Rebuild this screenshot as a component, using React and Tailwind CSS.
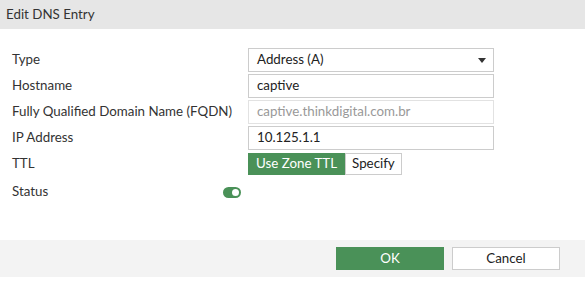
import { useState } from 'react';

const font = { fontFamily: 'Lato, "Liberation Sans", sans-serif' };

function Label({ children }) {
  return <div className="flex h-6 items-center pl-3 text-[13.33px] text-[#333]">{children}</div>;
}

export default function App() {
  const [ttl, setTtl] = useState('zone');

  return (
    <div className="flex h-[292px] w-[585px] flex-col bg-white" style={font}>
      <div className="flex h-[29px] items-center bg-[#e6e6e6] px-[6px] text-[13.33px] text-[#333]">Edit DNS Entry</div>

      <div className="grid grid-cols-[248px_246px] gap-y-[2px] pt-[19px]">
        <Label>Type</Label>
        <div className="flex h-6 items-center justify-between border border-[#ccc] pl-[8px] pr-[7px] text-[13.33px] text-[#222]">
          <span>Address (A)</span>
          <svg width="8" height="5" viewBox="0 0 8 5">
            <path d="M0 0h8L4 5z" fill="#333" />
          </svg>
        </div>

        <Label>Hostname</Label>
        <div className="flex h-6 items-center border border-[#ccc] pl-[8px] text-[13.33px] text-[#222]">captive</div>

        <Label>Fully Qualified Domain Name (FQDN)</Label>
        <div className="flex h-6 items-center border border-[#e2e2e2] pl-[8px] text-[13.33px] text-[#999]">captive.thinkdigital.com.br</div>

        <Label>IP Address</Label>
        <div className="flex h-6 items-center border border-[#ccc] pl-[8px] text-[13.33px] text-[#222]">10.125.1.1</div>

        <Label>TTL</Label>
        <div className="flex h-6 items-stretch py-[1px]">
          <button
            onClick={() => setTtl('zone')}
            className={`px-[8px] text-[13.33px] ${ttl === 'zone' ? 'bg-[#4a9158] text-white' : 'border border-[#ccc] bg-white text-[#222]'}`}
          >
            Use Zone TTL
          </button>
          <button
            onClick={() => setTtl('specify')}
            className={`px-[6px] text-[13.33px] ${ttl === 'specify' ? 'bg-[#4a9158] text-white' : 'border border-[#ccc] bg-white text-[#222]'}`}
          >
            Specify
          </button>
        </div>

        <div className="flex h-7 items-center justify-between pl-3 pr-[7px] text-[13.33px] text-[#333]">
          <span>Status</span>
          <span className="flex h-[11px] w-[18px] items-center justify-end rounded-full bg-[#4a9158] pr-[2px]">
            <span className="h-[7px] w-[7px] rounded-full bg-white" />
          </span>
        </div>
        <div />
      </div>

      <div className="mt-auto mb-[15px] flex h-[37px] items-center justify-end gap-2 bg-[#f3f3f3] pr-[25px]">
        <button className="h-[23px] w-[108px] bg-[#4a9158] text-[13.33px] text-white">OK</button>
        <button className="h-[23px] w-[108px] border border-[#ccc] bg-white text-[13.33px] text-[#222]">Cancel</button>
      </div>
    </div>
  );
}
